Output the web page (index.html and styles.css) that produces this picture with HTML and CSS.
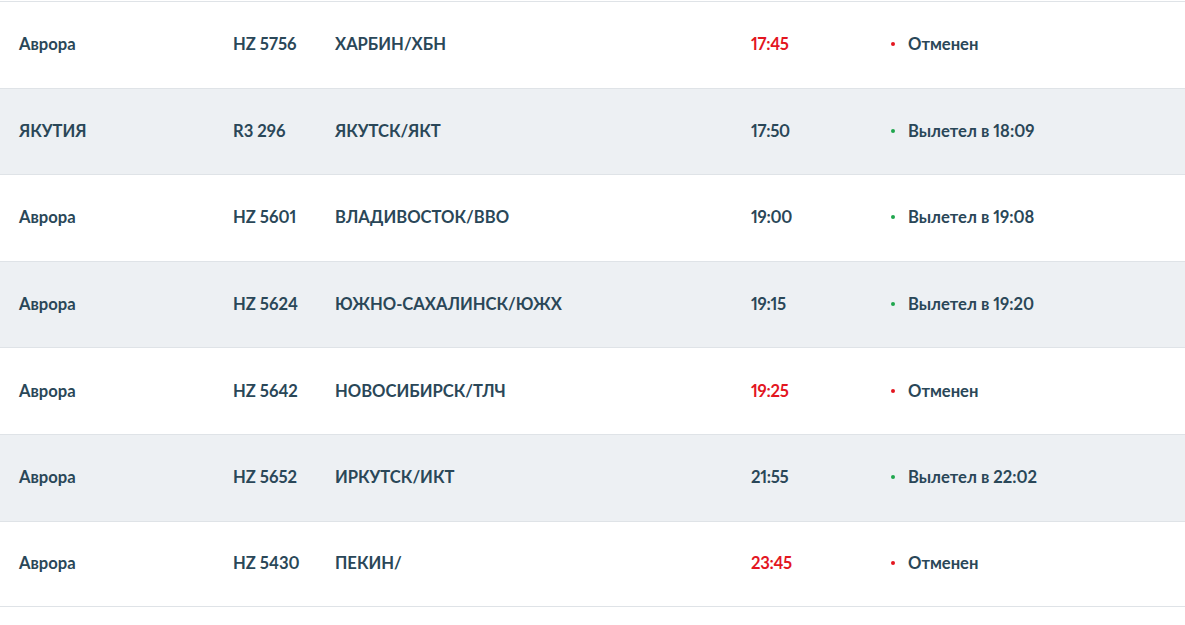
FILE: index.html
```html
<!DOCTYPE html>
<html lang="ru">
<head>
<meta charset="utf-8">
<link rel="stylesheet" href="styles.css">
</head>
<body>
<div class="board">
  <div class="row">
    <div class="cell airline">Аврора</div>
    <div class="cell flight">HZ 5756</div>
    <div class="cell dest">ХАРБИН/ХБН</div>
    <div class="cell time red">17:45</div>
    <div class="cell status"><span class="dot dot-red"></span>Отменен</div>
  </div>
  <div class="row alt">
    <div class="cell airline">ЯКУТИЯ</div>
    <div class="cell flight">R3 296</div>
    <div class="cell dest">ЯКУТСК/ЯКТ</div>
    <div class="cell time">17:50</div>
    <div class="cell status"><span class="dot dot-green"></span>Вылетел в 18:09</div>
  </div>
  <div class="row">
    <div class="cell airline">Аврора</div>
    <div class="cell flight">HZ 5601</div>
    <div class="cell dest">ВЛАДИВОСТОК/ВВО</div>
    <div class="cell time">19:00</div>
    <div class="cell status"><span class="dot dot-green"></span>Вылетел в 19:08</div>
  </div>
  <div class="row alt">
    <div class="cell airline">Аврора</div>
    <div class="cell flight">HZ 5624</div>
    <div class="cell dest">ЮЖНО-САХАЛИНСК/ЮЖХ</div>
    <div class="cell time">19:15</div>
    <div class="cell status"><span class="dot dot-green"></span>Вылетел в 19:20</div>
  </div>
  <div class="row">
    <div class="cell airline">Аврора</div>
    <div class="cell flight">HZ 5642</div>
    <div class="cell dest">НОВОСИБИРСК/ТЛЧ</div>
    <div class="cell time red">19:25</div>
    <div class="cell status"><span class="dot dot-red"></span>Отменен</div>
  </div>
  <div class="row alt">
    <div class="cell airline">Аврора</div>
    <div class="cell flight">HZ 5652</div>
    <div class="cell dest">ИРКУТСК/ИКТ</div>
    <div class="cell time">21:55</div>
    <div class="cell status"><span class="dot dot-green"></span>Вылетел в 22:02</div>
  </div>
  <div class="row last">
    <div class="cell airline">Аврора</div>
    <div class="cell flight">HZ 5430</div>
    <div class="cell dest">ПЕКИН/</div>
    <div class="cell time red">23:45</div>
    <div class="cell status"><span class="dot dot-red"></span>Отменен</div>
  </div>
</div>
</body>
</html>
```
FILE: styles.css
```css
html, body {
  margin: 0;
  padding: 0;
  background: #ffffff;
}
body {
  font-family: Lato, "Open Sans", sans-serif;
  font-weight: 700;
  font-size: 16.6px;
  color: #2a4758;
  font-variant-numeric: proportional-nums;
}
.board {
  padding-top: 1px;
}
.row {
  display: grid;
  grid-template-columns: 214px 102px 416px 141px 1fr;
  align-items: center;
  height: 86.6px;
  box-sizing: border-box;
  padding-left: 19px;
  padding-bottom: 1px;
  border-top: 1px solid #dfe3e7;
  background: #ffffff;
}
.row.alt {
  background: #edf0f3;
}
.row.last {
  border-bottom: 1px solid #dfe3e7;
}
.cell {
  white-space: nowrap;
}
.time {
  letter-spacing: -0.3px;
}
.red {
  color: #e3161f;
}
.status {
  display: flex;
  align-items: center;
}
.dot {
  width: 4px;
  height: 4px;
  border-radius: 50%;
  margin-left: -1px;
  margin-right: 13px;
}
.dot-red {
  background: #e3161f;
}
.dot-green {
  background: #1fa64d;
}
```
